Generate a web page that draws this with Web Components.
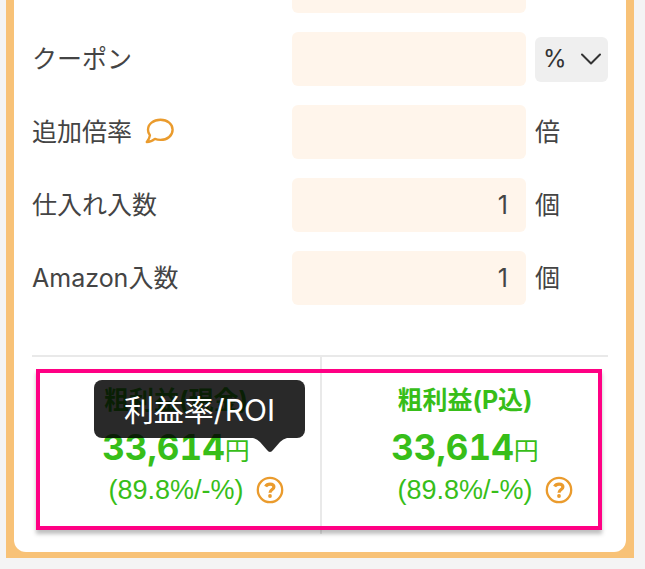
<!DOCTYPE html>
<html lang="ja">
<head>
<meta charset="utf-8">
<title>利益計算</title>
<style>
body { margin: 0; background: #f4f4f4; color: #444; font-family: Inter, "Noto Sans CJK JP", sans-serif; font-size: 25px; line-height: 36px; overflow: hidden; }
</style>
</head>
<body>
<profit-card>
  <form-row></form-row>
  <form-row label="クーポン" select="%"></form-row>
  <form-row label="追加倍率" unit="倍"><comment-icon slot="hint"></comment-icon></form-row>
  <form-row label="仕入れ入数" unit="個" value="1"></form-row>
  <form-row label="Amazon入数" unit="個" value="1"></form-row>
  <profit-summary slot="summary">
    <profit-cell amount="33,614" rate="(89.8%/-%)">粗利益(現金)<tool-tip slot="tip">利益率/ROI</tool-tip></profit-cell>
    <profit-cell amount="33,614" rate="(89.8%/-%)">粗利益(P込)</profit-cell>
  </profit-summary>
</profit-card>
<script>
const define = (name, render) => customElements.define(name, class extends HTMLElement {
  constructor() { super(); this.attachShadow({ mode: "open" }); }
  connectedCallback() { this.shadowRoot.innerHTML = render(this); }
});

define("profit-card", () => `
<style>
:host { display: block; margin: 0 11px 11px 6px; background: #f8c277; padding: 0 8px 6px; }
.panel { background: #fff; border-radius: 0 0 12px 12px; padding: 0 18px 18px; display: flow-root; }
.rows { display: grid; gap: 19px; margin: -41px 0 50px; }
</style>
<div class="panel"><div class="rows"><slot></slot></div><slot name="summary"></slot></div>`);

define("form-row", el => {
  const label = el.getAttribute("label") || "", unit = el.getAttribute("unit") || "", select = el.getAttribute("select");
  return `
<style>
:host { display: grid; grid-template-columns: 260fr 234fr 82fr; align-items: center; }
.name { display: flex; align-items: center; gap: 13px; }
input { box-sizing: border-box; width: 100%; min-width: 0; height: 54px; border: 0; border-radius: 6px; padding: 0 18px; background: #fff5eb; color: inherit; font: inherit; text-align: right; }
.unit { padding-left: 9px; }
.pick { display: grid; align-items: center; }
.pick > * { grid-area: 1 / 1; }
select { appearance: none; width: 100%; height: 45px; border: 0; border-radius: 6px; padding: 0 8px; background: #efefef; color: #333; font: inherit; font-size: 24px; }
svg { justify-self: end; margin-right: 7px; pointer-events: none; }
</style>
<div class="name"><label for="field">${label}</label><slot name="hint"></slot></div>
<input id="field" type="text" inputmode="decimal" value="${el.getAttribute("value") || ""}">
<div class="unit">${select ? `<div class="pick"><select aria-label="${label}の単位"><option>${select}</option></select>
<svg width="20" height="12" viewBox="0 0 20 12" fill="none" stroke="#333" stroke-width="2" stroke-linecap="round" stroke-linejoin="round"><path d="M1 1.5 10 10.5 19 1.5"/></svg></div>` : unit}</div>`;
});

define("comment-icon", () => `
<style>
:host { display: flex; }
button { display: flex; border: 0; padding: 0 0 2px; background: none; color: #ea9b2d; }
</style>
<button type="button" aria-label="説明"><svg width="30" height="26" viewBox="0 0 30 26" fill="none" stroke="currentColor" stroke-width="2.4" stroke-linejoin="round"><path d="M15.500 1.800C22.500 1.800 27.600 6 27.600 11.700C27.600 17.500 22.500 21.900 15.500 21.900C13.500 21.900 11.600 21.600 9.900 20.900C7.800 22.700 5 24 1.800 24C3.500 22 4.600 19.600 4.900 17.300C3.600 15.700 3 13.800 3 11.700C3 6 8.400 1.800 15.500 1.800Z"/></svg></button>`);

define("profit-summary", () => `
<style>
:host { display: grid; grid-template-columns: 1fr 1fr; position: relative; border-top: 2px solid #e9e9e9; }
::slotted(:last-child) { border-left: 2px solid #e9e9e9; }
.frame { position: absolute; inset: 12px 6px 4px 4px; border: 4px solid #ff0084; box-shadow: 0 4px 4px rgba(0,0,0,.25); pointer-events: none; }
</style>
<slot></slot><div class="frame"></div>`);

define("profit-cell", el => `
<style>
:host { display: block; position: relative; color: #37be19; text-align: center; padding: 25px 0 26px; }
.title { font-weight: 700; }
.amount { line-height: 58px; height: 54px; }
.amount b { font-size: 35px; font-variant-numeric: tabular-nums; }
.rate { display: grid; grid-template-columns: 1fr auto 1fr; align-items: center; }
.rate span { grid-column: 2; font-family: "Liberation Sans", sans-serif; font-size: 27px; }
button { display: flex; justify-self: start; margin-left: 12px; border: 0; padding: 0; background: none; color: #ea9b2d; }
</style>
<div class="title"><slot></slot></div>
<div class="amount"><b>${el.getAttribute("amount")}</b>円</div>
<div class="rate"><span>${el.getAttribute("rate")}</span>
<button type="button" aria-label="利益率/ROIの説明"><svg width="28" height="28" viewBox="0 0 28 28" fill="none" stroke="currentColor" stroke-width="2.300"><circle cx="14" cy="14" r="12.200"/><path stroke-width="3.200" stroke-linejoin="round" d="M9.600 10.600C10.500 8.900 12 8.200 14 8.200C16.300 8.200 17.900 9.300 17.900 11.100C17.900 13.500 14 13.600 14 16.700"/><circle cx="14" cy="20" r="1.900" fill="currentColor" stroke="none"/></svg></button></div>
<slot name="tip"></slot>`);

define("tool-tip", () => `
<style>
:host { position: absolute; top: 23px; right: 15px; box-sizing: border-box; padding: 8px 30px 6px; border-radius: 8px; background: rgba(0,0,0,.84); color: #fff; font-size: 30px; font-weight: 400; line-height: 44px; white-space: nowrap; }
svg { position: absolute; top: 100%; right: 18px; fill: rgba(0,0,0,.84); }
</style>
<slot></slot><svg width="34" height="15" viewBox="0 0 34 15"><path d="M0 0H34Q30 1 27 4L20 12Q17 16 14 12L7 4Q4 1 0 0Z"/></svg>`);
</script>
</body>
</html>
